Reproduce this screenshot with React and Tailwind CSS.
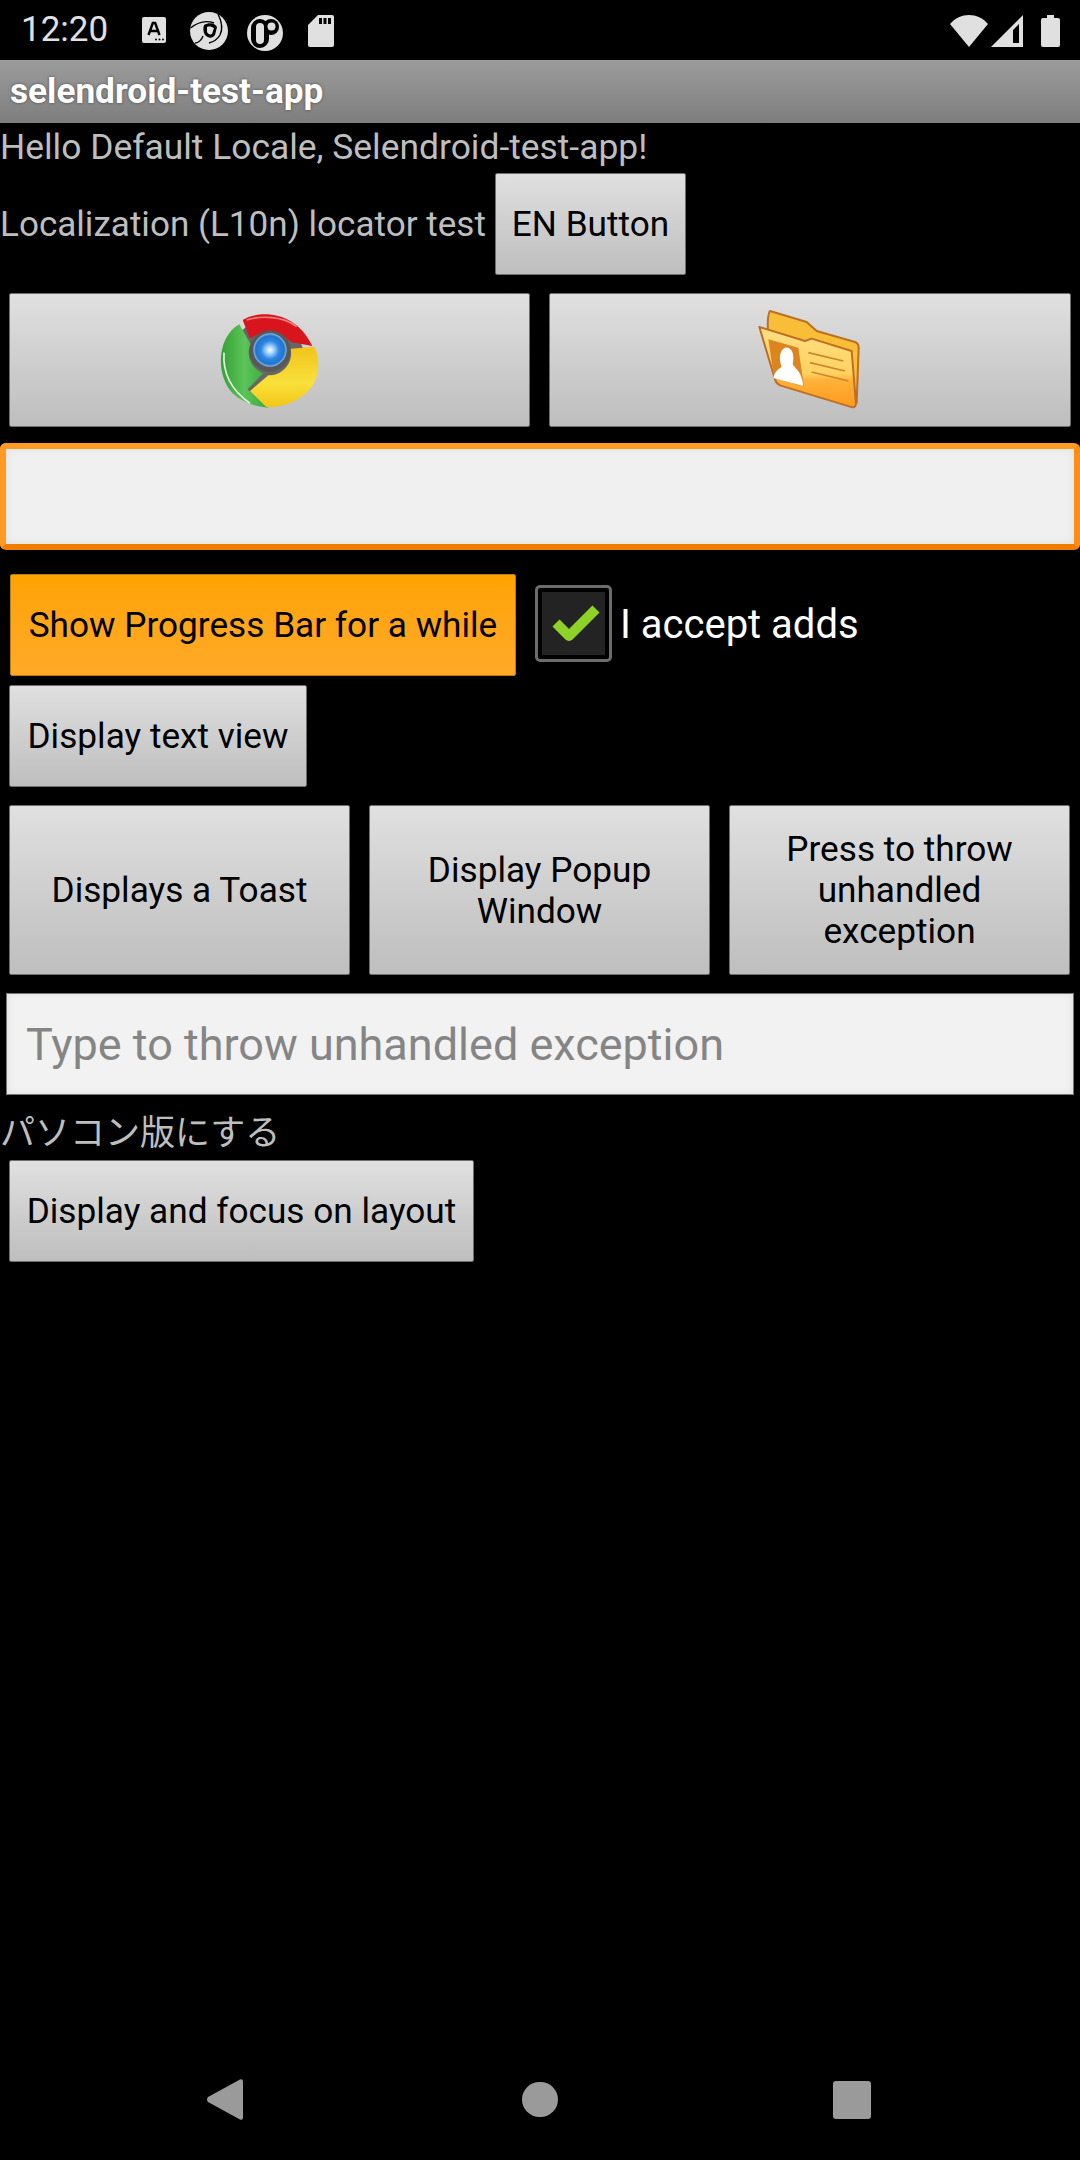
const font = { fontFamily: 'Roboto, "Noto Sans CJK JP", sans-serif' };

function Btn({ className = "", children }) {
  return (
    <div className={"flex items-center justify-center rounded-[2px] border border-[#6e6e6e] bg-gradient-to-b from-[#e0e0e0] to-[#bebebe] pt-[1px] text-center text-[35.2px] leading-[41px] text-black " + className}>
      {children}
    </div>
  );
}

function ABox() {
  return (
    <svg width="24" height="27" viewBox="0 0 24 27">
      <rect x="0" y="0" width="24" height="26" rx="2" fill="#e0e0e0" />
      <path d="M6.5 18 L10.8 6 L13.2 6 L17.5 18 M8.5 14 L15.5 14" stroke="#000" strokeWidth="2.4" fill="none" />
      <circle cx="14" cy="22.5" r="1" fill="#000" /><circle cx="17.5" cy="22.5" r="1" fill="#000" /><circle cx="21" cy="22.5" r="1" fill="#000" />
    </svg>
  );
}
function Swirl() {
  return (
    <svg width="38" height="38" viewBox="0 0 38 38">
      <circle cx="19" cy="19" r="19" fill="#e0e0e0" />
      <path d="M0.5 16 C8 10 16 8 24 11" stroke="#000" strokeWidth="1.4" fill="none" />
      <path d="M28 2 C32 10 33 17 30 23 C27 28 23 30 19 31" stroke="#000" strokeWidth="1.4" fill="none" />
      <path d="M5 31 C9 31 12 27 13 24" stroke="#000" strokeWidth="1.4" fill="none" />
      <path d="M14 13 C19 10 25 11 27 15 L25 23 C22 27 18 26 15 23 C13 20 13 16 14 13 Z" fill="#000" />
      <path d="M17 15 C20 14 22 15 24 16 L22 22 C20 23 18 22 17 20 Z" fill="#e0e0e0" />
    </svg>
  );
}
function Toggle() {
  return (
    <svg width="36" height="36" viewBox="0 0 36 36">
      <circle cx="18" cy="18" r="18" fill="#e0e0e0" />
      <rect x="4" y="4" width="18" height="29" rx="9" fill="#000" />
      <circle cx="24" cy="12" r="8" fill="#000" />
      <rect x="9" y="8" width="8" height="21" rx="4" fill="#e0e0e0" />
      <circle cx="24.5" cy="11.5" r="4" fill="#e0e0e0" />
    </svg>
  );
}
function SdCard() {
  return (
    <svg width="26" height="32" viewBox="0 0 26 32">
      <path d="M10 0 L24 0 Q26 0 26 2 L26 30 Q26 32 24 32 L2 32 Q0 32 0 30 L0 10 Z" fill="#e0e0e0" />
      <rect x="11" y="3" width="3" height="6" fill="#000" /><rect x="15.5" y="3" width="3" height="6" fill="#000" /><rect x="20" y="3" width="3" height="6" fill="#000" />
    </svg>
  );
}
function Wifi() {
  return (
    <svg width="38" height="32" viewBox="0 0 38 32">
      <path d="M0 9 C5 3 12 0 19 0 C26 0 33 3 38 9 L19 32 Z" fill="#e0e0e0" />
    </svg>
  );
}
function Signal() {
  return (
    <svg width="32" height="32" viewBox="0 0 32 32">
      <path d="M32 0 L32 32 L0 32 Z M28 9 L22 15 L22 28 L28 28 Z" fill="#e0e0e0" fillRule="evenodd" />
    </svg>
  );
}
function Battery() {
  return (
    <svg width="19" height="32" viewBox="0 0 19 32">
      <path d="M6 0 L13 0 L13 3 L17 3 Q19 3 19 5 L19 30 Q19 32 17 32 L2 32 Q0 32 0 30 L0 5 Q0 3 2 3 L6 3 Z" fill="#e0e0e0" />
    </svg>
  );
}

function Chrome() {
  return (
    <svg width="140" height="130" viewBox="0 0 420 390">
      <defs>
        <radialGradient id="blue">
          <stop offset="0" stopColor="#ffffff" />
          <stop offset="0.22" stopColor="#a8d6ff" />
          <stop offset="0.55" stopColor="#2f86e0" />
          <stop offset="0.85" stopColor="#1f74cf" />
          <stop offset="1" stopColor="#8ab8e8" />
        </radialGradient>
        <linearGradient id="grn" x1="0" y1="0" x2="1" y2="0">
          <stop offset="0" stopColor="#35a035" />
          <stop offset="0.5" stopColor="#5cc458" />
          <stop offset="1" stopColor="#35a83c" />
        </linearGradient>
        <linearGradient id="yel" x1="0" y1="0" x2="0" y2="1">
          <stop offset="0" stopColor="#f0c41c" />
          <stop offset="0.6" stopColor="#f9e03a" />
          <stop offset="1" stopColor="#f2c618" />
        </linearGradient>
      </defs>
      <ellipse cx="200" cy="195" rx="115" ry="120" fill="#666" />
      <path d="M128 72 C175 42 285 40 337 150 L272 138 C250 108 190 98 150 128 Z" fill="#d8141c" />
      <path d="M140 72 C185 58 250 60 290 92" stroke="#ee7f7f" strokeWidth="5" fill="none" />
      <path d="M118 85 C55 120 42 230 98 292 C130 322 170 332 205 335 L143 280 L190 232 C158 220 135 180 152 145 Z" fill="url(#grn)" />
      <path d="M72 170 C68 225 90 280 150 322" stroke="#e8f5e0" strokeWidth="5" fill="none" />
      <path d="M343 152 C362 190 360 250 322 288 C285 322 240 336 198 332 L150 285 L205 238 C250 238 280 200 272 158 Z" fill="url(#yel)" />
      <circle cx="210" cy="165" r="62" fill="#585858" />
      <circle cx="210" cy="162" r="50" fill="url(#blue)" />
    </svg>
  );
}

function Folder() {
  return (
    <svg width="140" height="130" viewBox="0 0 420 390">
      <defs>
        <linearGradient id="fold" x1="0" y1="0" x2="0" y2="1">
          <stop offset="0" stopColor="#ffdf85" />
          <stop offset="0.58" stopColor="#ffd260" />
          <stop offset="0.66" stopColor="#ffb238" />
          <stop offset="1" stopColor="#ff9a1e" />
        </linearGradient>
      </defs>
      <path d="M90 45 L200 78 L230 105 L345 138 Q356 142 356 155 L350 320 L85 120 Q80 60 90 45 Z" fill="#f9be38" stroke="#bd6f24" strokeWidth="6" strokeLinejoin="round" />
      <path d="M58 93 L195 135 L215 128 L335 165 L348 325 Q345 338 330 332 L120 268 Q108 262 105 250 Z" fill="url(#fold)" stroke="#bd6f24" strokeWidth="6" strokeLinejoin="round" />
      <path d="M85 130 L175 155 L192 272 L102 246 Z" fill="#dc8420" />
      <path d="M100 246 C104 225 118 218 125 212 C118 195 115 165 135 155 C155 152 165 175 158 205 C165 218 185 225 190 270 Z" fill="#ffffff" />
      <path d="M205 170 L310 195 M210 200 L315 225 M215 228 L325 255" stroke="#cc8530" strokeWidth="5" fill="none" />
    </svg>
  );
}

function Check() {
  return (
    <div className="ml-[19px] mt-[11px] flex h-[77px] w-[77px] shrink-0 items-center justify-center rounded-[5px] border-[3px] border-[#6c6c6c] bg-black p-[4px]">
      <div className="flex h-full w-full items-center justify-center bg-[#232323]">
        <svg width="62" height="62" viewBox="0 0 62 62">
          <path d="M13 30 L26 43 L53 16" stroke="#8ed228" strokeWidth="10" fill="none" strokeLinejoin="round" />
        </svg>
      </div>
    </div>
  );
}

export default function App() {
  return (
    <div className="flex h-[2160px] w-[1080px] flex-col overflow-hidden bg-black" style={font}>
      <div className="flex h-[60px] items-center text-[#e0e0e0]">
        <span className="ml-[21px] w-[87px] text-[35px] leading-[40px]">12:20</span>
        <div className="ml-[34px] mb-[-1px]"><ABox /></div>
        <div className="ml-[24px] mb-[-1px]"><Swirl /></div>
        <div className="ml-[19px] mb-[5px] mt-[10px]"><Toggle /></div>
        <div className="ml-[25px] mb-[-1px]"><SdCard /></div>
        <div className="ml-auto mb-[-2px]"><Wifi /></div>
        <div className="ml-[3px] mb-[-2px]"><Signal /></div>
        <div className="ml-[18px] mb-[-2px] mr-[20px]"><Battery /></div>
      </div>

      <div className="flex h-[63px] items-center bg-gradient-to-b from-[#9c9c9c] to-[#7e7e7e] pl-[10px] text-[35.2px] font-bold text-white [text-shadow:0_0_3px_rgba(0,0,0,0.5)]">
        selendroid-test-app
      </div>

      <div className="mt-[4px] text-[35.4px] leading-[41px] text-[#bebebe]">Hello Default Locale, Selendroid-test-app!</div>

      <div className="mt-[5px] flex items-center text-[35.1px] leading-[41px] text-[#bebebe]">
        <span className="w-[495px] shrink-0 whitespace-nowrap pt-[1px]">Localization (L10n) locator test</span>
        <Btn className="h-[102px] w-[191px]">EN Button</Btn>
      </div>

      <div className="mt-[18px] flex gap-[19px] px-[9px]">
        <Btn className="h-[134px] w-[521px]"><Chrome /></Btn>
        <Btn className="h-[134px] w-[522px]"><Folder /></Btn>
      </div>

      <div className="mt-[16px] h-[107px] rounded-[6px] border-[6px] border-t-[#ff9a22] border-l-[#ff9a22] border-r-[#fb8c14] border-b-[#f07c00] bg-[#f0f0f0] shadow-[inset_0_0_8px_rgba(0,0,0,0.08)]" />

      <div className="mt-[24px] flex items-start pl-[10px]">
        <Btn className="h-[102px] w-[506px] !border-[#b97c12] !from-[#ffa300] !to-[#ffa926]">Show Progress Bar for a while</Btn>
        <Check />
        <span className="ml-[8px] mt-[27px] whitespace-nowrap text-[40px] leading-[47px] text-white">I accept adds</span>
      </div>

      <div className="mt-[9px] pl-[9px]">
        <Btn className="h-[102px] w-[298px]">Display text view</Btn>
      </div>

      <div className="mt-[18px] flex gap-[19px] pl-[9px]">
        <Btn className="h-[170px] w-[341px]">Displays a Toast</Btn>
        <Btn className="h-[170px] w-[341px]">Display Popup<br />Window</Btn>
        <Btn className="h-[170px] w-[341px]">Press to throw<br />unhandled<br />exception</Btn>
      </div>

      <div className="mx-[6px] mt-[18px] flex h-[102px] items-center border border-[#777] bg-[#f2f2f2] pl-[19px] text-[45px] leading-[53px] text-[#858585] shadow-[inset_0_0_8px_rgba(0,0,0,0.08)]">
        Type to throw unhandled exception
      </div>

      <div className="mt-[18px] text-[35px] leading-[41px] text-[#bebebe]">パソコン版にする</div>

      <div className="mt-[6px] pl-[9px]">
        <Btn className="h-[102px] w-[465px] whitespace-nowrap">Display and focus on layout</Btn>
      </div>

      <div className="mt-auto flex h-[81px] items-start">
        <svg className="ml-[207px]" width="36" height="41" viewBox="0 0 36 41">
          <path d="M33 0.5 Q36 -0.5 36 2.5 L36 38.5 Q36 41.5 33 40.5 L1 23 Q-1 20.5 1 18 Z" fill="#9a9a9a" />
        </svg>
        <div className="ml-[279px] mt-[3px] h-[35px] w-[36px] rounded-full bg-[#9a9a9a]" />
        <div className="ml-[275px] mt-[2px] h-[38px] w-[38px] rounded-[3px] bg-[#9a9a9a]" />
      </div>
    </div>
  );
}
